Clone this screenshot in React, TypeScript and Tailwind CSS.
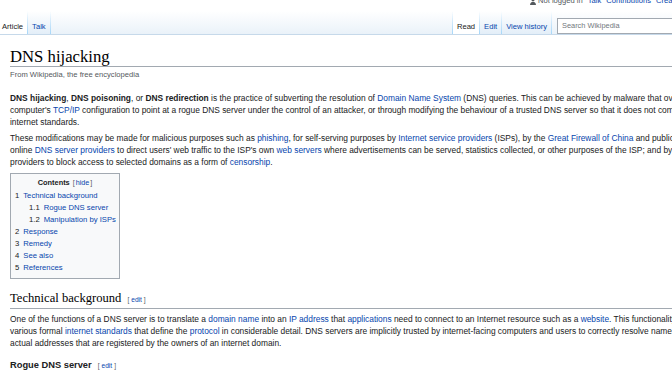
import React from 'react';

// Wikipedia article page (Vector skin), cropped on the right

const A: React.FC<{ children: React.ReactNode }> = ({ children }) => (
  <a className="text-[#0645ad]">{children}</a>
);

const Line: React.FC<{ children: React.ReactNode }> = ({ children }) => (
  <div className="whitespace-nowrap">{children}</div>
);

const Sep = () => <div className="w-px self-stretch bg-linear-to-b from-transparent to-[#a7d7f9]" />;

const Tab: React.FC<{ label: string; selected?: boolean; first?: boolean }> = ({ label, selected, first }) => (
  <div
    className={`flex items-end pb-[2px] ${first ? 'pl-[2px] pr-[4px]' : 'px-[4px]'} ${
      selected ? 'bg-white text-[#202122]' : 'bg-linear-to-b from-white to-[#e3eef8] text-[#0645ad]'
    }`}
  >
    <span className="leading-[10px]">{label}</span>
  </div>
);

const EditLink = () => (
  <span className="ml-[6px] font-['Liberation_Sans',Arial,sans-serif] font-normal text-[6.6px] text-[#54595d]">
    [<span className="mx-[2px] text-[#0645ad]">edit</span>]
  </span>
);

const tocItems: { num: string; label: string; sub?: boolean }[] = [
  { num: '1', label: 'Technical background' },
  { num: '1.1', label: 'Rogue DNS server', sub: true },
  { num: '1.2', label: 'Manipulation by ISPs', sub: true },
  { num: '2', label: 'Response' },
  { num: '3', label: 'Remedy' },
  { num: '4', label: 'See also' },
  { num: '5', label: 'References' },
];

export default function App() {
  return (
    <div className="w-[672px] h-[372px] overflow-hidden bg-white font-['Liberation_Sans',Arial,sans-serif] text-[#202122]">
      {/* personal tools, mostly cut off at the top */}
      <div className="h-[11px] flex items-start pl-[530px]">
        <div className="-mt-[4px] flex items-center gap-[5px] whitespace-nowrap text-[7.6px] leading-[10px]">
          <span className="flex items-center gap-[2px] text-[#54595d]">
            <svg width="6" height="7" viewBox="0 0 12 14" fill="#54595d">
              <circle cx="6" cy="3.5" r="3.2" />
              <path d="M0 14c0-4 2.5-6.5 6-6.5s6 2.5 6 6.5z" />
            </svg>
            Not logged in
          </span>
          <A>Talk</A>
          <A>Contributions</A>
          <A>Create account</A>
          <A>Log in</A>
        </div>
      </div>

      {/* tabs strip */}
      <div className="h-[24px] flex border-b border-[#c6d9ea] bg-linear-to-b from-white to-[#eaf2f9] text-[7.6px]">
        <Tab label="Article" selected first />
        <Sep />
        <Tab label="Talk" />
        <Sep />
        <div className="flex-1" />
        <Sep />
        <Tab label="Read" selected />
        <Sep />
        <Tab label="Edit" />
        <Sep />
        <Tab label="View history" />
        <Sep />
        <div className="ml-[5px] mt-[7px] h-[16px] w-[115px] border border-r-0 border-[#a2a9b1] bg-white flex items-center pl-[4px] text-[7.4px] text-[#72777d] whitespace-nowrap">
          Search Wikipedia
        </div>
      </div>

      <div className="pl-[10px]">
        <h1 className="mt-[12px] font-['Liberation_Serif','Times_New_Roman',serif] text-[16.7px] leading-[19px] text-black border-b border-[#a2a9b1] whitespace-nowrap">
          DNS hijacking
        </h1>
        <div className="mt-[3px] text-[7.6px] leading-[10px] text-[#54595d]">From Wikipedia, the free encyclopedia</div>

        <div className="text-[8.4px] leading-[12px]">
          <div className="mt-[12px]">
            <Line>
              <b>DNS hijacking</b>, <b>DNS poisoning</b>, or <b>DNS redirection</b> is the practice of subverting the
              resolution of <A>Domain Name System</A> (DNS) queries. This can be achieved by malware that overrides a
            </Line>
            <Line>
              computer's <A>TCP/IP</A> configuration to point at a rogue DNS server under the control of an attacker, or
              through modifying the behaviour of a trusted DNS server so that it does not comply with
            </Line>
            <Line>internet standards.</Line>
          </div>
          <div className="mt-[4px]">
            <Line>
              These modifications may be made for malicious purposes such as <A>phishing</A>, for self-serving purposes
              by <A>Internet service providers</A> (ISPs), by the <A>Great Firewall of China</A> and public/router-based
            </Line>
            <Line>
              online <A>DNS server providers</A> to direct users' web traffic to the ISP's own <A>web servers</A> where
              advertisements can be served, statistics collected, or other purposes of the ISP; and by DNS service
            </Line>
            <Line>
              providers to block access to selected domains as a form of <A>censorship</A>.
            </Line>
          </div>
        </div>

        {/* table of contents */}
        <div className="mt-[5px] w-[110px] border border-[#a2a9b1] bg-[#f8f9fa] pt-[3px] pb-[4px] text-[7.7px] leading-[12px] whitespace-nowrap">
          <div className="text-center">
            <b className="text-[7.4px]">Contents</b>
            <span className="ml-[3px] text-[7.2px] text-[#54595d]">
              [<span className="mx-[1px] text-[#0645ad]">hide</span>]
            </span>
          </div>
          <div className="mt-[1px]">
            {tocItems.map((it) => (
              <div key={it.num} className={it.sub ? 'pl-[18px]' : 'pl-[4px]'}>
                <span className="pr-[4px]">{it.num}</span>
                <A>{it.label}</A>
              </div>
            ))}
          </div>
        </div>

        <h2 className="mt-[11px] font-['Liberation_Serif','Times_New_Roman',serif] text-[12.6px] leading-[16px] text-black border-b border-[#a2a9b1] whitespace-nowrap">
          Technical background
          <EditLink />
        </h2>
        <div className="mt-[4px] text-[8.4px] leading-[12px]">
          <Line>
            One of the functions of a DNS server is to translate a <A>domain name</A> into an <A>IP address</A> that{' '}
            <A>applications</A> need to connect to an Internet resource such as a <A>website</A>. This functionality is
            defined in
          </Line>
          <Line>
            various formal <A>internet standards</A> that define the <A>protocol</A> in considerable detail. DNS servers
            are implicitly trusted by internet-facing computers and users to correctly resolve names to the
          </Line>
          <Line>actual addresses that are registered by the owners of an internet domain.</Line>
        </div>

        <h3 className="mt-[10px] text-[9.3px] leading-[12px] font-bold whitespace-nowrap">
          Rogue DNS server
          <EditLink />
        </h3>
      </div>
    </div>
  );
}
